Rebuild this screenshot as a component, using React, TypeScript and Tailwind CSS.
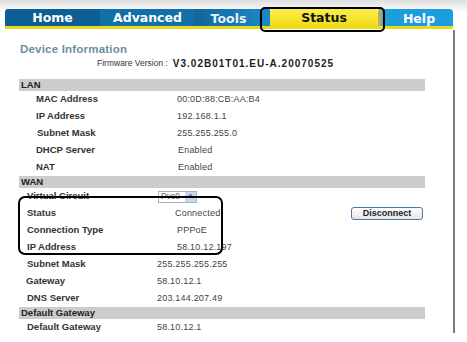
type Row = {
  label: string;
  value?: string;
  labelPad: string;
  labelWidth: string;
};

const lanRows: Row[] = [
  { label: 'MAC Address', value: '00:0D:88:CB:AA:B4', labelPad: 'pl-[17px]', labelWidth: 'w-[158px]' },
  { label: 'IP Address', value: '192.168.1.1', labelPad: 'pl-[17px]', labelWidth: 'w-[158px]' },
  { label: 'Subnet Mask', value: '255.255.255.0', labelPad: 'pl-[18px]', labelWidth: 'w-[158px]' },
  { label: 'DHCP Server', value: 'Enabled', labelPad: 'pl-[17px]', labelWidth: 'w-[159px]' },
  { label: 'NAT', value: 'Enabled', labelPad: 'pl-[17px]', labelWidth: 'w-[159px]' },
];

const wanBottom: Row[] = [
  { label: 'Subnet Mask', value: '255.255.255.255', labelPad: 'pl-[8px]', labelWidth: 'w-[138px]' },
  { label: 'Gateway', value: '58.10.12.1', labelPad: 'pl-[7px]', labelWidth: 'w-[138px]' },
  { label: 'DNS Server', value: '203.144.207.49', labelPad: 'pl-[8px]', labelWidth: 'w-[138px]' },
];

const gatewayRows: Row[] = [
  { label: 'Default Gateway', value: '58.10.12.1', labelPad: 'pl-[8px]', labelWidth: 'w-[138px]' },
];

function InfoRow({ row, children }: { row: Row; children?: React.ReactNode }) {
  return (
    <div className="flex h-[17px] items-center">
      <span className={`shrink-0 ${row.labelWidth} ${row.labelPad} text-[9.5px] font-bold text-[#333]`}>{row.label}</span>
      {row.value && <span className="text-[9px] tracking-[0.2px] text-[#444]">{row.value}</span>}
      {children}
    </div>
  );
}

function Bar({ title }: { title: string }) {
  return (
    <div className="flex h-[12px] items-center bg-[#cccccc] pl-[2px] text-[9.5px] font-bold text-[#222]">
      {title}
    </div>
  );
}

function Tabs() {
  const tab = 'flex h-[17px] items-center justify-center pt-[2px] text-[12.5px] font-bold leading-none';
  return (
    <div className="relative h-[30px] bg-gradient-to-b from-[#dedede] via-white via-40% to-white pt-[8px] pl-[5px]">
      <div className="flex h-[21px] w-[448px] items-end border-b-[3px] border-[#e9da1c]" style={{ fontFamily: '"DejaVu Sans", sans-serif' }}>
        <div className={`${tab} w-[95px] rounded-tl-[3px] bg-[#0d5e93] text-white`}>Home</div>
        <div className={`${tab} w-[95px] bg-[#1270a9] text-white`}>Advanced</div>
        <div className={`${tab} w-[67px] bg-gradient-to-r from-[#14659c] to-[#1b86c4] pt-[4px] text-[#e8f2f8]`}>Tools</div>
        <div className="h-[17px] w-[8px] bg-[#1a87c6]" />
        <div className="flex h-[18px] w-[108px] items-center justify-center rounded-t-[5px] bg-gradient-to-b from-[#fbee4a] to-[#f1dc10] pt-[2px] text-[12.5px] font-bold leading-none text-[#111]">
          Status
        </div>
        <div className="h-[17px] w-[7px] bg-gradient-to-r from-[#c9b83a] to-[#1a8fd0]" />
        <div className={`${tab} w-[68px] rounded-tr-[4px] bg-[#1c9ddc] pt-[4px] text-white`}>Help</div>
      </div>
      <div className="absolute left-[260px] top-[7px] h-[25px] w-[125px] rounded-[5px] border-2 border-black" />
    </div>
  );
}

export default function App() {
  return (
    <div className="relative h-[342px] w-[467px] overflow-hidden bg-white" style={{ fontFamily: '"Liberation Sans", Arial, sans-serif' }}>
      <Tabs />
      <div className="absolute left-[453px] top-[30px] h-[303px] w-[2px] bg-[#7a7a7a]" />

      <div className="w-[425px] pl-[19px]">
        <div className="pt-[11px] pl-[1px] text-[11.5px] font-bold leading-[16px] tracking-[0.2px] text-[#6b8fa1]">Device Information</div>
        <div className="flex h-[13px] items-center pl-[78px]">
          <span className="text-[8.5px] text-[#3a3040]">Firmware Version :</span>
          <span className="pl-[5px] text-[10px] font-bold tracking-[1px] text-[#222]">V3.02B01T01.EU-A.20070525</span>
        </div>
        <div className="h-[9px]" />

        <Bar title="LAN" />
        {lanRows.map((r) => (
          <InfoRow key={r.label} row={r} />
        ))}

        <Bar title="WAN" />
        <InfoRow row={{ label: 'Virtual Circuit', labelPad: 'pl-[8px]', labelWidth: 'w-[139px]' }}>
          <div className="flex h-[12px] w-[39px] items-center border border-[#9fb4c6] bg-white">
            <span className="flex-1 pl-[2px] text-[8.5px] leading-none text-[#666]">Pvc0</span>
            <span className="flex h-[10px] w-[11px] items-center justify-center bg-[#c5d8ec] text-[6px] text-[#5579a0]">▼</span>
          </div>
        </InfoRow>
        <InfoRow row={{ label: 'Status', value: 'Connected', labelPad: 'pl-[8px]', labelWidth: 'w-[156px]' }}>
          <div className="ml-auto mr-[2px] flex h-[13px] w-[72px] items-center justify-center rounded-[3px] border border-[#4d78a6] bg-gradient-to-b from-white to-[#e6e6e6] text-[9px] font-bold text-[#222]">
            Disconnect
          </div>
        </InfoRow>
        <InfoRow row={{ label: 'Connection Type', value: 'PPPoE', labelPad: 'pl-[8px]', labelWidth: 'w-[158px]' }} />
        <InfoRow row={{ label: 'IP Address', value: '58.10.12.197', labelPad: 'pl-[8px]', labelWidth: 'w-[158px]' }} />
        {wanBottom.map((r) => (
          <InfoRow key={r.label} row={r} />
        ))}

        <Bar title="Default Gateway" />
        {gatewayRows.map((r) => (
          <InfoRow key={r.label} row={r} />
        ))}
      </div>

      {/* annotation box around WAN status */}
      <div className="absolute left-[18px] top-[196px] h-[59px] w-[205px] rounded-[7px] border-2 border-black" />
    </div>
  );
}
